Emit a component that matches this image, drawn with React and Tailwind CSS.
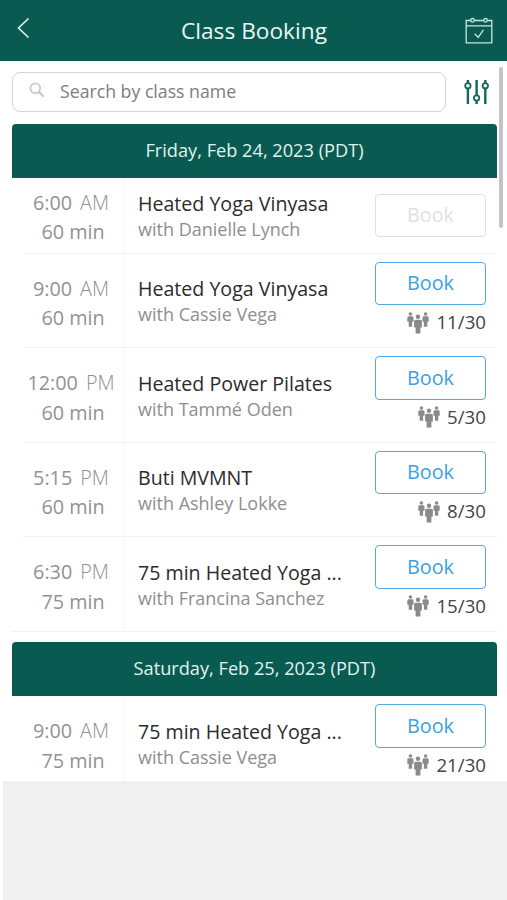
const days = [
  {
    date: "Friday, Feb 24, 2023 (PDT)",
    classes: [
      { time: "6:00", period: "AM", length: "60 min", name: "Heated Yoga Vinyasa", teacher: "Danielle Lynch" },
      { time: "9:00", period: "AM", length: "60 min", name: "Heated Yoga Vinyasa", teacher: "Cassie Vega", spots: "11/30" },
      { time: "12:00", period: "PM", length: "60 min", name: "Heated Power Pilates", teacher: "Tammé Oden", spots: "5/30" },
      { time: "5:15", period: "PM", length: "60 min", name: "Buti MVMNT", teacher: "Ashley Lokke", spots: "8/30" },
      { time: "6:30", period: "PM", length: "75 min", name: "75 min Heated Yoga ...", teacher: "Francina Sanchez", spots: "15/30" },
    ],
  },
  {
    date: "Saturday, Feb 25, 2023 (PDT)",
    classes: [
      { time: "9:00", period: "AM", length: "75 min", name: "75 min Heated Yoga ...", teacher: "Cassie Vega", spots: "21/30" },
    ],
  },
];

const CalendarIcon = () => (
  <svg width="28" height="28" viewBox="0 0 28 28" fill="none" stroke="#c9e4de" strokeWidth="1.3">
    <path d="M5.5 3.5H1.2v22.3h25.6V3.5h-4.3M9.5 3.5h9M1.2 8.8h25.6" />
    <circle cx="7.5" cy="3.3" r="1.8" />
    <circle cx="20.5" cy="3.3" r="1.8" />
    <path d="M9.8 16.8l3.4 3.6 5.2-7.6" />
  </svg>
);

const FilterIcon = () => (
  <svg width="26" height="26" viewBox="0 0 26 26" fill="none" stroke="#15675b" strokeWidth="2.4">
    <path d="M4.9 1v3M4.9 9.5V25M13.6 1v15.5M13.6 22v3M22.3 1v3M22.3 9.5V25" />
    <g strokeWidth="1.8">
      <circle cx="4.9" cy="6.8" r="2.7" />
      <circle cx="13.6" cy="19" r="2.7" />
      <circle cx="22.3" cy="6.8" r="2.7" />
    </g>
  </svg>
);

const PeopleIcon = () => (
  <svg width="22" height="22" viewBox="0 0 22 22" fill="#8a8a8a">
    <circle cx="3.4" cy="2" r="1.8" />
    <path d="M1.8 4.3H5q1.5 0 1.5 1.4v4.1H5.1v5H1.7v-5H.3V5.7q0-1.4 1.5-1.4z" />
    <circle cx="18.6" cy="2" r="1.8" />
    <path d="M17 4.3h3.2q1.5 0 1.5 1.4v4.1h-1.4v5h-3.4v-5h-1.4V5.7q0-1.4 1.5-1.4z" />
    <circle cx="11" cy="4.8" r="2.2" />
    <path d="M8.6 7.7h4.8q1.5 0 1.5 1.5v6.3h-1.5v6H8.6v-6H7.1V9.2q0-1.5 1.5-1.5z" />
  </svg>
);

const ClassRow = ({ item, last }) => {
  const full = !item.spots;

  return (
    <div className={`flex ${full ? "h-[75.5px]" : "h-[94.5px]"} ${last ? "" : "pl-[11px]"}`}>
      <div className={`flex shrink-0 flex-col items-center border-r border-[#f3f7f7] text-[19.8px] leading-[29.5px] text-[#929292] ${last ? "w-[113px] pl-[6px]" : "w-[102px] pr-[5px]"} ${full ? "pt-[9.5px]" : "pt-5"} border-b border-b-[#f0f3f4]`}>
        <p className="whitespace-nowrap">
          {item.time}
          <span className="ml-2 font-light">{item.period}</span>
        </p>
        <p className="pl-1">{item.length}</p>
      </div>
      <div className="flex min-w-0 grow border-b border-[#f0f3f4] pr-[11px] pl-[13px]">
        <div className={`grow whitespace-nowrap ${full ? "pt-3" : "pt-[21.5px]"}`}>
          <h3 className="text-[19.6px] leading-7 text-[#2b2b2b]">{item.name}</h3>
          <p className="text-lg leading-[23px] text-[#8e8e8e]">with {item.teacher}</p>
        </div>
        <div className={`w-[111px] shrink-0 ${full ? "pt-[15.5px]" : "pt-2"}`}>
          <button
            disabled={full}
            className={`h-[43.5px] w-full rounded-[4px] border text-[19.8px] ${full ? "border-[#e0e0e0] text-[#e1e1e1]" : "border-[#4fa9e8] text-[#3b9fe4]"}`}
          >
            Book
          </button>
          {item.spots && (
            <div className="flex h-[35px] items-center justify-end gap-[7.5px] text-[18.7px] text-[#444]">
              <PeopleIcon />
              <span>{item.spots}</span>
            </div>
          )}
        </div>
      </div>
    </div>
  );
};

export default function App() {
  return (
    <div className="flex h-[900px] w-[507px] flex-col overflow-hidden bg-white font-['Open_Sans',sans-serif]">
      <header className="flex h-[61px] shrink-0 items-center justify-between bg-[#095b51] pr-[14px] pl-[17px] text-white">
        <svg width="28" height="22" viewBox="0 0 28 22" fill="none" stroke="#e4f3ef" strokeWidth="1.6" className="mb-[5px]">
          <path d="M11.5 1.5L1.5 11l10 9.5" />
        </svg>
        <h1 className="pt-0.5 pr-[2px] text-[22.7px] text-[#e9f7f3]">Class Booking</h1>
        <CalendarIcon />
      </header>

      <div className="relative h-[720px] shrink-0 overflow-hidden pr-[10px] pl-3">
        <div className="absolute top-[6px] right-[4px] h-[161px] w-[4px] rounded-full bg-[#c4c4c4]" />

        <div className="flex items-center gap-[17px] pt-[10.5px]">
          <label className="flex h-10 w-[434px] items-center rounded-lg border border-[#d4d4d4] pl-4">
            <svg width="16" height="16" viewBox="0 0 16 16" fill="none" stroke="#c9c9c9" strokeWidth="1.8" className="mb-[3px]">
              <circle cx="6.3" cy="6.3" r="4.9" />
              <path d="M9.8 9.8l5 5" strokeWidth="2.3" />
            </svg>
            <input
              className="ml-[15px] w-80 text-[17.7px] outline-none placeholder:text-[#7d7d7d]"
              placeholder="Search by class name"
            />
          </label>
          <FilterIcon />
        </div>

        <div className="mt-[12.5px] flex flex-col gap-[10.5px]">
          {days.map((day) => (
            <section key={day.date}>
              <h2 className="flex h-[54px] items-center justify-center rounded-t-[4px] bg-[#095b51] text-[18.2px] text-[#e0f3ee]">
                {day.date}
              </h2>
              {day.classes.map((item, i) => (
                <ClassRow key={i} item={item} last={i === day.classes.length - 1} />
              ))}
            </section>
          ))}
        </div>
      </div>

      <div className="ml-[3px] grow bg-[#f0f0f0]" />
    </div>
  );
}
